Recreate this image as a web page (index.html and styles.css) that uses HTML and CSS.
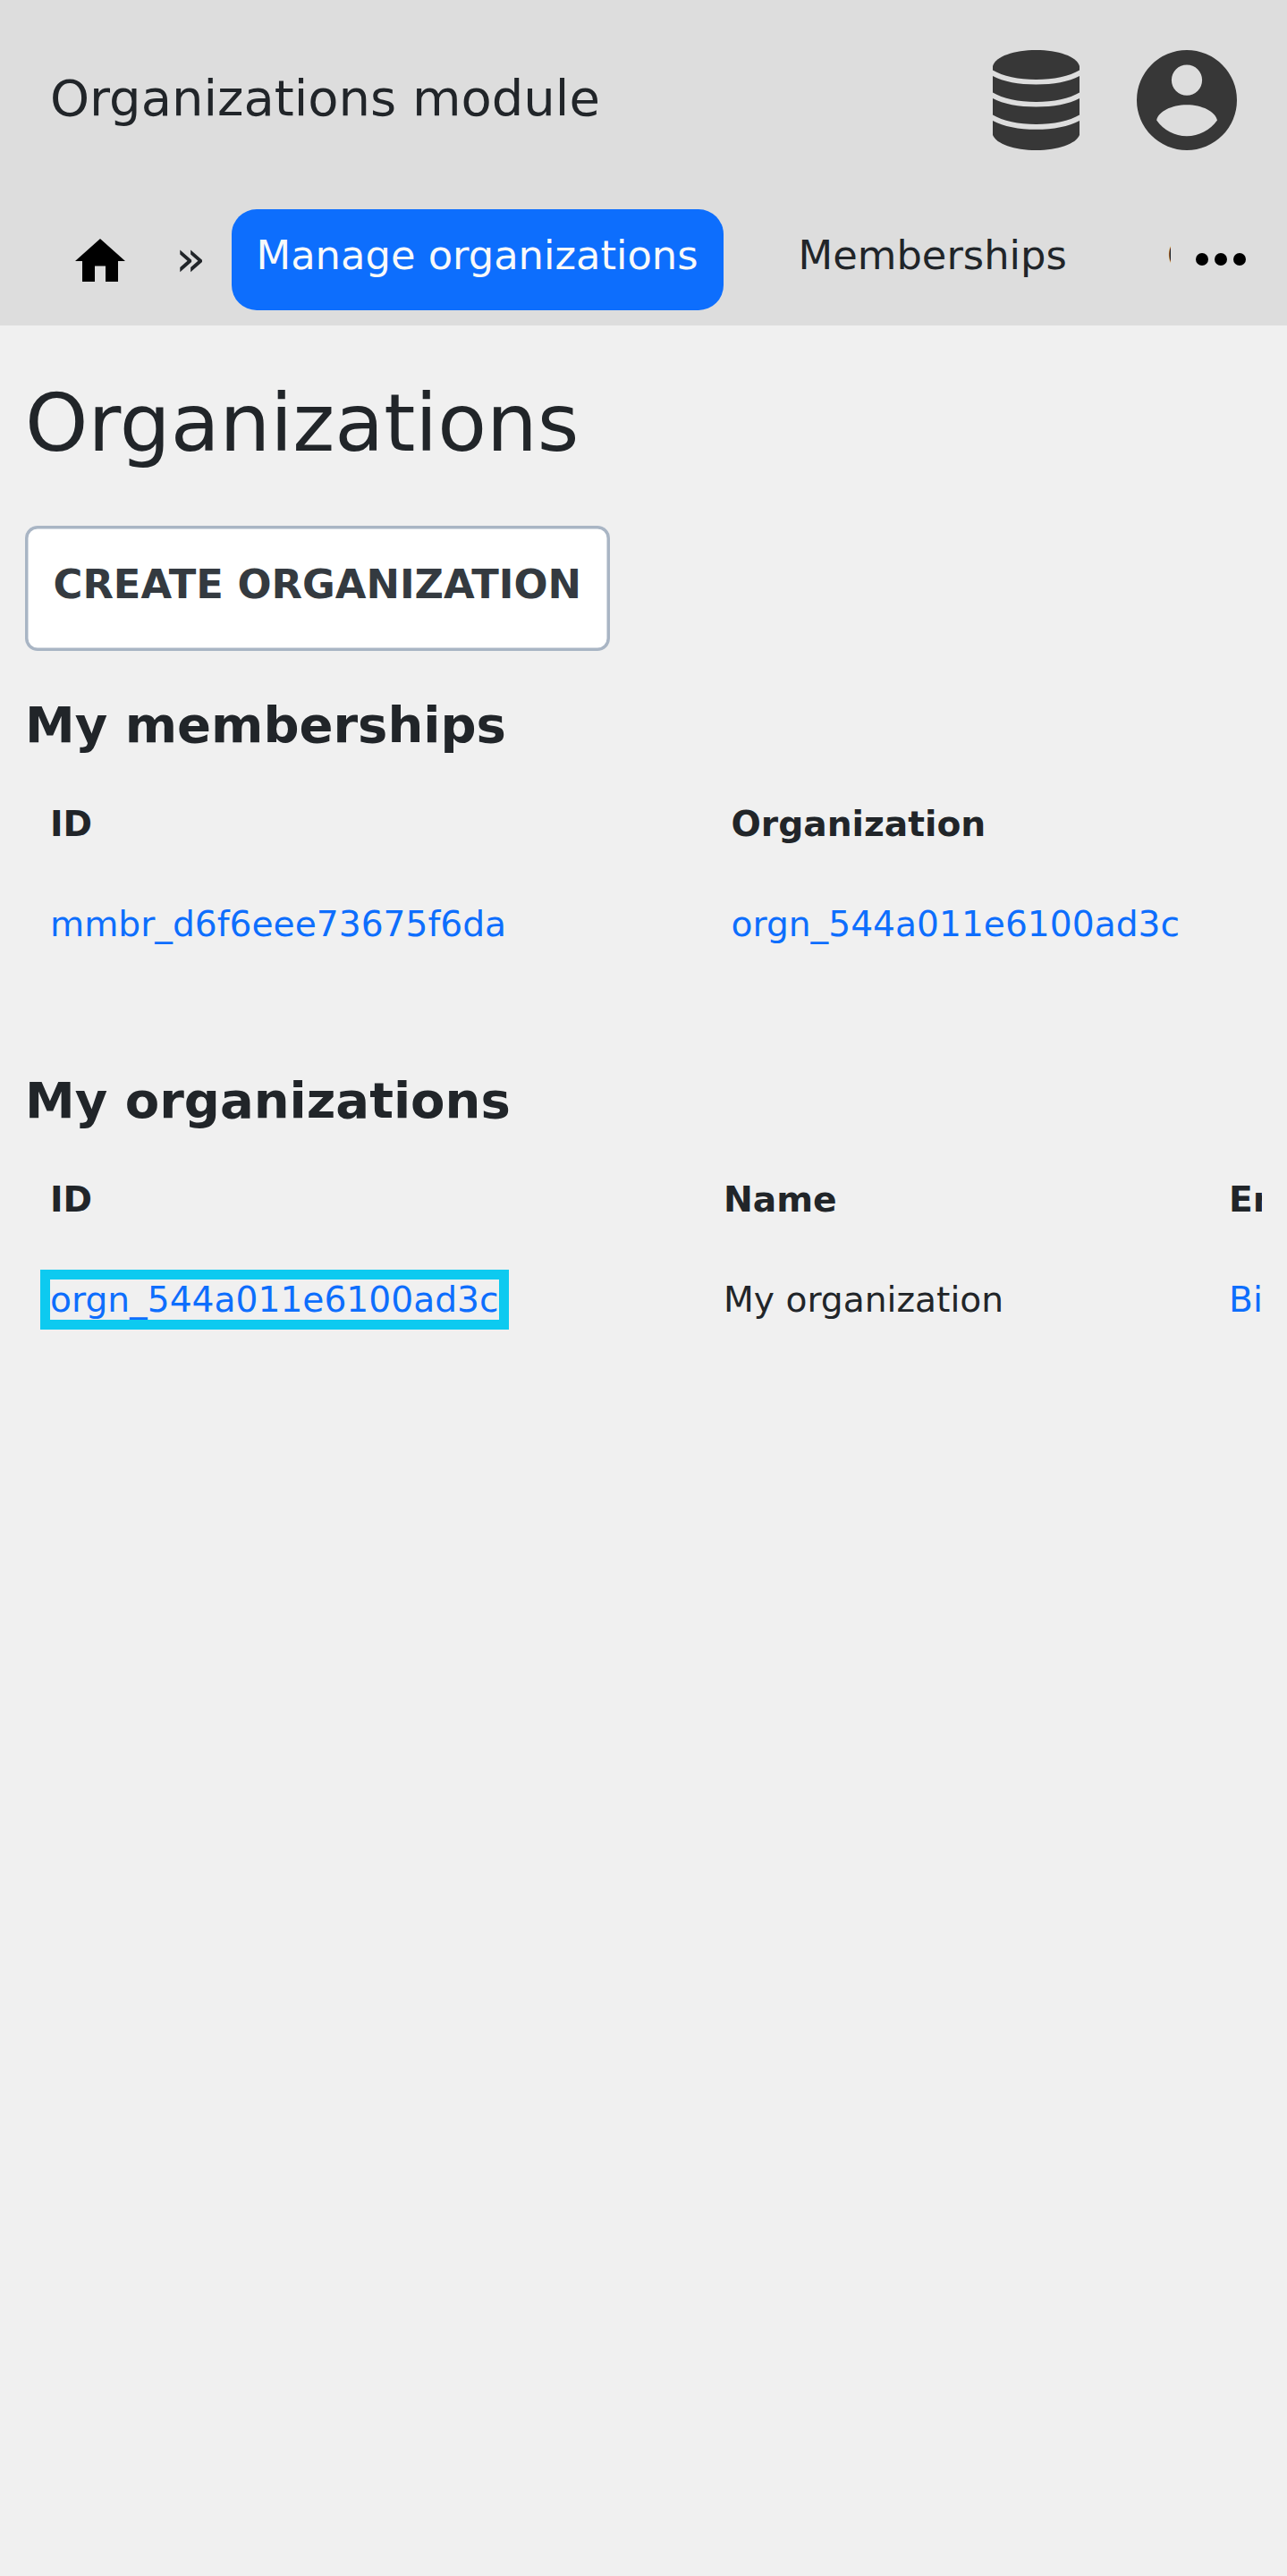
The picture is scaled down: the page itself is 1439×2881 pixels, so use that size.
FILE: index.html
```html
<!DOCTYPE html>
<html lang="en">
<head>
<meta charset="utf-8">
<title>Organizations module</title>
<link rel="stylesheet" href="styles.css">
</head>
<body>
<header class="header">
  <div class="topbar">
    <span class="brand">Organizations module</span>
    <div class="actions">
      <svg class="icon-db" viewBox="0 0 97 112" fill="currentColor" aria-hidden="true">
        <path d="M0 18C3 7 24 0 48.500 0S94 7 97 18v4.500C86 29 68 33 48.500 33S11 29 0 22.500z"/>
        <path d="M0 29c12 6.500 29 9.500 48.500 9.500S85 35.500 97 29v18.500C86 54 68 58 48.500 58S11 54 0 47.500z"/>
        <path d="M0 54c12 6.500 29 9.500 48.500 9.500S85 60.500 97 54v18.500C86 79 68 83 48.500 83S11 79 0 72.500z"/>
        <path d="M0 79c12 6.500 29 9.800 48.500 9.800S85 85.500 97 79v16c-4 10-24 17-48.500 17S4 105 0 95z"/>
      </svg>
      <svg class="icon-user" viewBox="0 0 112 112" fill="currentColor" aria-hidden="true">
        <path fill-rule="evenodd" d="M56 0a56 56 0 1 0 0 112A56 56 0 0 0 56 0zm0 16.500a17 17 0 1 1 0 34.200 17 17 0 0 1 0-34.200zM56 61.300c17 0 32 7.500 34 17.200C82 89.500 69.500 96.300 56 96.300S30 89.500 22.200 78.500C24 68.800 39 61.300 56 61.300z"/>
      </svg>
    </div>
  </div>
  <nav class="nav">
    <a class="home"><svg class="icon-home" viewBox="0 0 56 48" aria-label="Home"><path d="M28 0 56 25H48V48H34V30.500H22V48H8V25H0z"/></svg></a>
    <span class="sep">»</span>
    <div class="tabs">
      <a class="tab active">Manage organizations</a>
      <a class="tab">Memberships</a>
      <a class="tab">Organizations</a>
    </div>
    <svg class="icon-more" viewBox="0 0 56 14" aria-label="More"><circle cx="7" cy="7" r="7"/><circle cx="28" cy="7" r="7"/><circle cx="49" cy="7" r="7"/></svg>
  </nav>
</header>
<main class="main">
  <h1 class="title">Organizations</h1>
  <button class="create">CREATE ORGANIZATION</button>
  <h2 class="section">My memberships</h2>
  <div class="table memberships">
    <span class="th">ID</span><span class="th">Organization</span>
    <span class="td"><a class="link">mmbr_d6f6eee73675f6da</a></span><span class="td"><a class="link">orgn_544a011e6100ad3c</a></span>
  </div>
  <h2 class="section second">My organizations</h2>
  <div class="table organizations">
    <span class="th">ID</span><span class="th">Name</span><span class="th">Entity</span>
    <span class="td"><a class="link highlight">orgn_544a011e6100ad3c</a></span><span class="td">My organization</span><span class="td"><a class="link">Billing</a></span>
  </div>
</main>
</body>
</html>
```
FILE: styles.css
```css
* { box-sizing: border-box; }
body {
  margin: 0;
  min-height: 2881px;
  background: #f0f0f0;
  color: #212529;
  font-family: "DejaVu Sans", sans-serif;
}
.header { height: 364px; background: #ddd; }
.topbar {
  display: flex;
  justify-content: space-between;
  padding: 56px 56px 0;
  height: 234px;
}
.brand { font-size: 56px; line-height: 108px; }
.actions { display: flex; gap: 64px; color: #373737; }
.icon-db { width: 97px; height: 112px; }
.icon-user { width: 112px; height: 112px; }
.nav { display: flex; align-items: flex-start; height: 113px; padding-left: 84px; }
.home { width: 56px; padding-top: 33px; }
.icon-home { display: block; width: 56px; height: 48px; }
.sep { width: 62.5px; margin-left: 56px; font-size: 56px; line-height: 109px; }
.tabs { display: flex; gap: 56px; width: 1050.5px; overflow: hidden; }
.tab {
  height: 112.5px;
  padding: 0 28px;
  border-radius: 28px;
  font-size: 44.8px;
  line-height: 103px;
  white-space: nowrap;
}
.active { background: #0d6efd; color: #f8f9fa; }
.icon-more { width: 56px; height: 14px; margin: 49px 0 0 28px; }
.main { padding: 55px 28px 0; }
.title { margin: 0; font-size: 89.6px; font-weight: 400; line-height: 108px; }
.create {
  display: block;
  height: 140px;
  margin: 61px 0 0;
  padding: 3px 31.5px 13px;
  border: 0;
  border-radius: 14px;
  background: #fff;
  box-shadow: inset 0 0 0 3.5px #a9b5c4;
  color: #343a40;
  font: bold 44.8px "DejaVu Sans", sans-serif;
}
.section { margin: 49px 0 22px; font-size: 56px; line-height: 67px; }
.second { margin-top: 107px; }
.table {
  display: grid;
  grid-auto-rows: 112px;
  padding-left: 28px;
  overflow: hidden;
  font-size: 39.2px;
  line-height: 112px;
  white-space: nowrap;
}
.memberships { grid-template-columns: 761.500px 1fr; }
.organizations { grid-template-columns: 753px 565px 300px; }
.th { font-weight: 700; }
.link { color: #0d6efd; }
.highlight { outline: 11px solid #0dcaf0; }
```
